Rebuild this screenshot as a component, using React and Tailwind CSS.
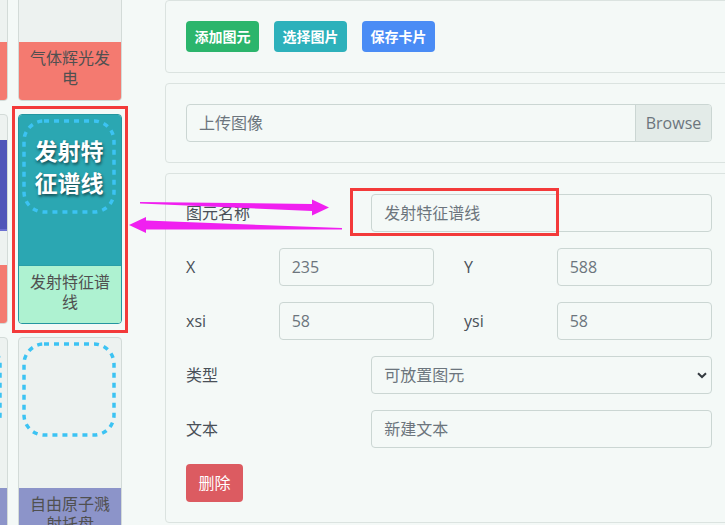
import React from "react";

function Dotted() {
  return (
    <svg width="94" height="95" viewBox="0 0 94 95" className="block">
      <rect x="2" y="2" width="90" height="91" rx="20" ry="20" fill="none" stroke="#3cc3f3" strokeWidth="3.5" strokeDasharray="5 5" />
    </svg>
  );
}

function Card({ label, labelBg, imageBg = "", border = "border-[#d3dbd8]", bigText, extra, hideDotted }) {
  return (
    <div className={`w-[104px] h-[210px] border ${border} rounded-[4px] bg-[#edf2f0] overflow-hidden flex flex-col`}>
      <div className={`h-[150px] shrink-0 relative ${imageBg}`}>
        {!hideDotted && (
          <div className="absolute left-[3px] top-[4px]">
            <Dotted />
          </div>
        )}
        {bigText && (
          <div className="absolute left-[3px] top-[4px] w-[94px] h-[95px] flex items-center justify-center px-[10px] text-center text-white font-bold text-[23px] leading-[32px] [text-shadow:1px_2px_3px_rgba(0,0,0,0.55)]">
            {bigText}
          </div>
        )}
        {extra}
      </div>
      <div className={`flex-1 px-[6px] pt-[6px] text-center text-[16px] leading-[20px] text-[#505050] ${labelBg}`}>
        {label}
      </div>
    </div>
  );
}

function Input({ value, className = "" }) {
  return (
    <div className={`h-[38px] border border-[#cbd6d3] rounded-[4px] bg-[#f4f9f7] px-[12px] flex items-center text-[16px] text-[#6c757d] ${className}`}>
      {value}
    </div>
  );
}

function Label({ children, className = "" }) {
  return <div className={`h-[38px] flex items-center text-[16px] text-[#495057] ${className}`}>{children}</div>;
}

export default function App() {
  return (
    <div className="relative w-[725px] h-[525px] overflow-hidden bg-[#f4f9f7] flex font-['Open_Sans','Noto_Sans_CJK_SC',sans-serif]">
      {/* left list */}
      <div className="w-[165px] shrink-0 overflow-hidden">
        <div className="grid grid-cols-[104px_104px] gap-x-[10px] gap-y-[13px] ml-[-96px] mt-[-109px]">
          <Card label="等离子体炬" labelBg="bg-[#f47a70]" />
          <Card label="气体辉光发电" labelBg="bg-[#f47a70]" />
          <Card
            label="空心阴极灯"
            labelBg="bg-[#f47a70]"
            hideDotted
            extra={<div className="absolute left-0 right-0 top-[25px] h-[91px] bg-[#4f56b9] border-b-[2px] border-[#6b70d2]" />}
          />
          <Card
            label="发射特征谱线"
            labelBg="bg-[#aef2d1] border-t border-[#2a9ea8]"
            imageBg="bg-[#2ba7b2]"
            border="border-[#2496a0]"
            bigText="发射特征谱线"
          />
          <Card label="自由原子溅射托盘" labelBg="bg-[#8c94c9]" />
          <Card label="自由原子溅射托盘" labelBg="bg-[#8c94c9]" />
        </div>
      </div>

      {/* right panels */}
      <div className="w-[568px] shrink-0 flex flex-col gap-[10px]">
        <div className="border border-[#dbe3e0] rounded-[4px] p-[20px] flex gap-[15px]">
          <button className="h-[31px] w-[73px] rounded-[4px] bg-[#2bb56c] text-white text-[14px] font-bold leading-[21px]">添加图元</button>
          <button className="h-[31px] w-[73px] rounded-[4px] bg-[#2db1bb] text-white text-[14px] font-bold leading-[21px]">选择图片</button>
          <button className="h-[31px] w-[73px] rounded-[4px] bg-[#4a8cf5] text-white text-[14px] font-bold leading-[21px]">保存卡片</button>
        </div>

        <div className="border border-[#dbe3e0] rounded-[4px] p-[20px]">
          <div className="h-[38px] border border-[#cbd6d3] rounded-[4px] flex overflow-hidden">
            <div className="flex-1 px-[12px] flex items-center text-[16px] text-[#6c757d]">上传图像</div>
            <div className="w-[76px] border-l border-[#cbd6d3] bg-[#e3ebe8] flex items-center justify-center text-[16px] text-[#6c757d]">Browse</div>
          </div>
        </div>

        <div className="border border-[#dbe3e0] rounded-[4px] p-[20px] flex flex-col gap-[16px]">
          <div className="grid grid-cols-12 gap-x-[30px]">
            <Label className="col-span-4">图元名称</Label>
            <Input className="col-span-8" value="发射特征谱线" />
          </div>
          <div className="grid grid-cols-12 gap-x-[30px]">
            <Label className="col-span-2">X</Label>
            <Input className="col-span-4" value="235" />
            <Label className="col-span-2">Y</Label>
            <Input className="col-span-4" value="588" />
          </div>
          <div className="grid grid-cols-12 gap-x-[30px]">
            <Label className="col-span-2">xsi</Label>
            <Input className="col-span-4" value="58" />
            <Label className="col-span-2">ysi</Label>
            <Input className="col-span-4" value="58" />
          </div>
          <div className="grid grid-cols-12 gap-x-[30px]">
            <Label className="col-span-4">类型</Label>
            <div className="col-span-8 h-[38px] border border-[#cbd6d3] rounded-[4px] bg-[#f4f9f7] pl-[12px] pr-[4px] flex items-center justify-between text-[16px] text-[#6c757d]">
              <span>可放置图元</span>
              <svg width="10" height="7" viewBox="0 0 10 7">
                <path d="M1 1.2 L5 5 L9 1.2" fill="none" stroke="#343a40" strokeWidth="2" />
              </svg>
            </div>
          </div>
          <div className="grid grid-cols-12 gap-x-[30px]">
            <Label className="col-span-4">文本</Label>
            <Input className="col-span-8" value="新建文本" />
          </div>
          <div>
            <button className="h-[38px] w-[57px] rounded-[4px] bg-[#dc5b61] text-white text-[16px]">删除</button>
          </div>
        </div>
      </div>

      {/* annotations */}
      <div className="absolute left-[12px] top-[106px] w-[116px] h-[227px] border-[3px] border-[#f33a3a] pointer-events-none" />
      <div className="absolute left-[350px] top-[188px] w-[209px] h-[48px] border-[3px] border-[#f33a3a] pointer-events-none" />
      <svg className="absolute left-0 top-0 pointer-events-none" width="725" height="525" viewBox="0 0 725 525">
        <polygon points="140,202 312,204 312,199.5 329,207.5 312,215.5 312,211 140,203.5" fill="#f020f0" />
        <polygon points="129,225 146,217 146,220.5 342,228 342,229.5 146,229.5 146,233" fill="#f020f0" />
      </svg>
    </div>
  );
}
